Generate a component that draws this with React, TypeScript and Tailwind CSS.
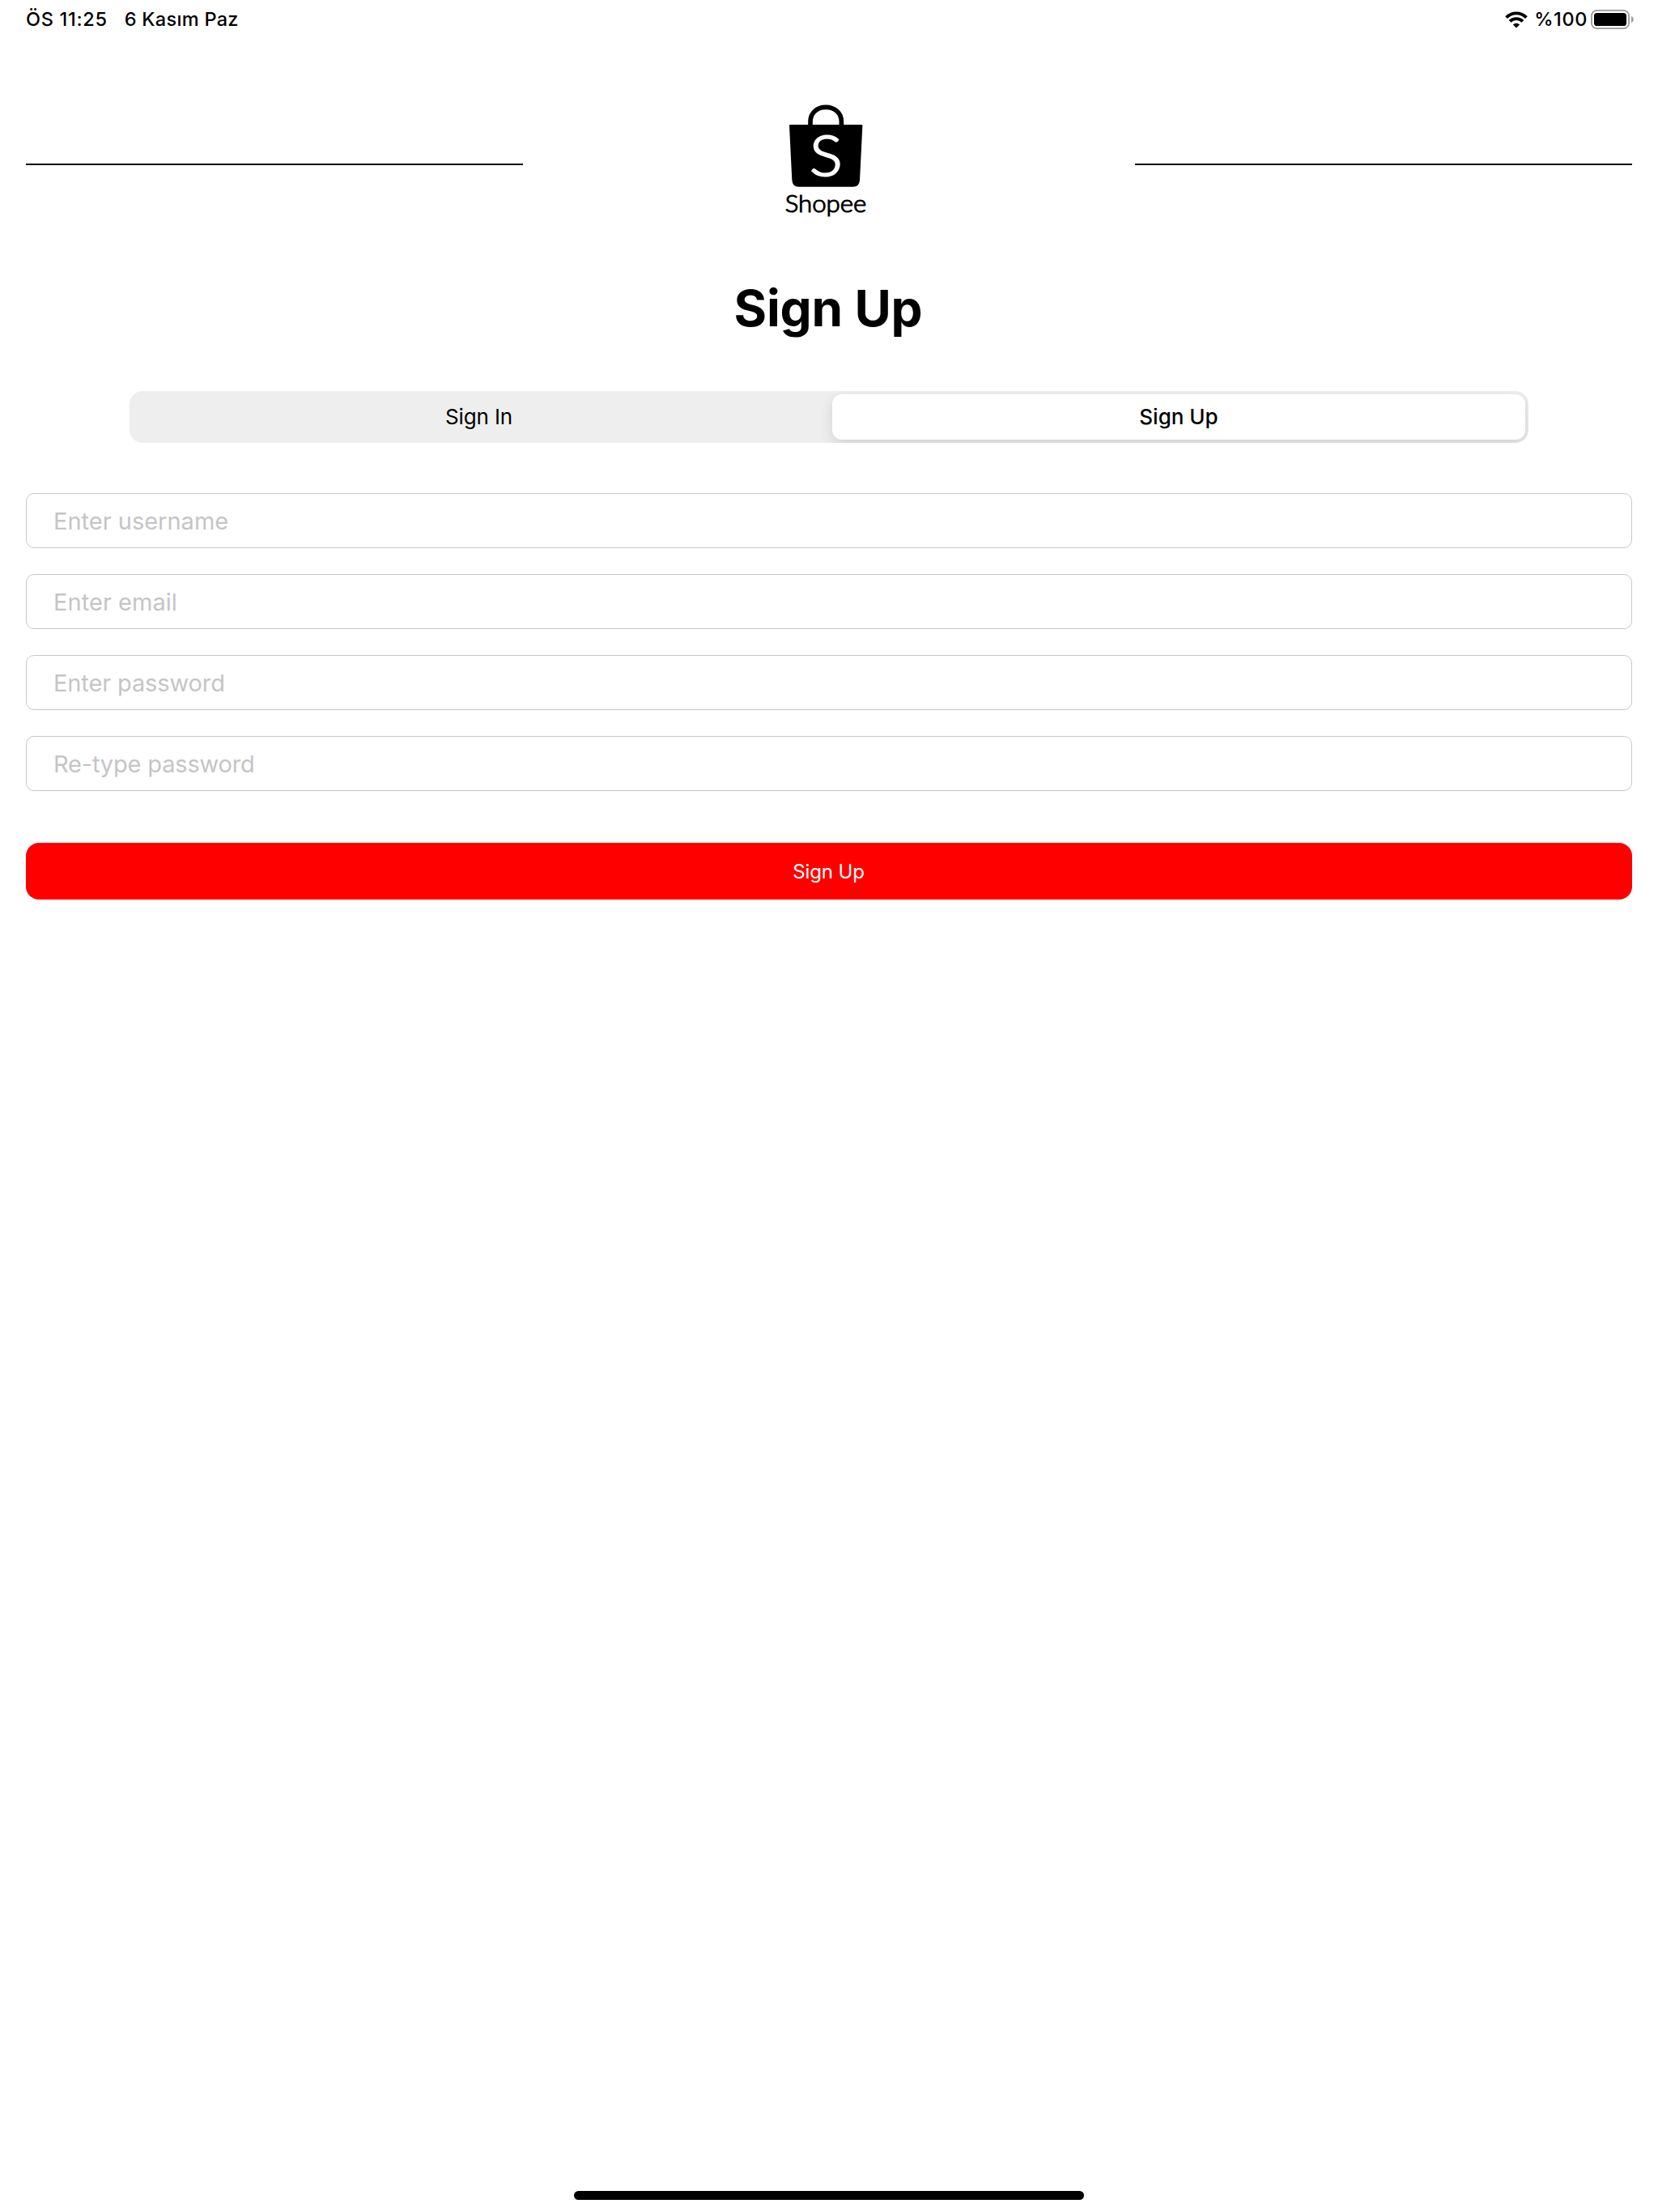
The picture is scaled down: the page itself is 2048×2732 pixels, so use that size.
const fields = [
  { label: "Enter username", type: "text", tracking: "tracking-normal" },
  { label: "Enter email", type: "email", tracking: "tracking-[0.05px]" },
  { label: "Enter password", type: "password", tracking: "tracking-[-0.12px]" },
  { label: "Re-type password", type: "password", tracking: "tracking-[-0.17px]" },
];

function WifiIcon() {
  return (
    <svg className="h-[21px] w-[28px]" viewBox="0 0 28 21" fill="none" stroke="#000">
      <path d="M1.6 7.6C8.5 0.6 19.5 0.6 26.4 7.6" strokeWidth="3.9" />
      <path d="M6.1 12.3C10.5 8 17.5 8 21.9 12.3" strokeWidth="3.9" />
      <path d="M14 20.6L9.9 16.5C12.2 14.2 15.8 14.2 18.1 16.5Z" fill="#000" stroke="none" />
    </svg>
  );
}

function BatteryIcon() {
  return (
    <svg className="h-[24px] w-[53px]" viewBox="0 0 53 24">
      <rect x="0.9" y="0.9" width="46.2" height="22.2" rx="6.6" fill="none" stroke="#9b9b9b" strokeWidth="1.8" />
      <rect x="4" y="4" width="40" height="16" rx="3.6" fill="#000" />
      <path d="M50 8C53.7 9.4 53.7 14.6 50 16Z" fill="#9b9b9b" />
    </svg>
  );
}

function StatusBar() {
  return (
    <header className="flex h-12 items-center justify-between pr-[30px] pl-8 text-[23.5px] font-medium">
      <div className="flex gap-[21px]">
        <span className="tracking-[0.7px]">ÖS 11:25</span>
        <span className="tracking-[0.3px]">6 Kasım Paz</span>
      </div>
      <div className="flex items-center">
        <WifiIcon />
        <span className="mr-1 ml-2 tracking-[0.6px]">%100</span>
        <BatteryIcon />
      </div>
    </header>
  );
}

function Logo() {
  return (
    <svg className="h-[170px] w-[160px]" viewBox="12 0 480 510">
      <path
        d="M183 136V121C183 88 209 67 240.500 67C272 67 298 88 298 121V136"
        fill="#fff"
        stroke="#000"
        strokeWidth="17"
      />
      <path d="M109 132H372Q376 132 376 136L366 338Q364 362 340 362H140Q117 362 115 338L105 136Q105 132 109 132Z" />
      <text
        x="241"
        y="322"
        textAnchor="middle"
        fill="#fff"
        stroke="#fff"
        strokeWidth="6"
        fontFamily="Lato, sans-serif"
        fontWeight="300"
        fontSize="207"
        textLength="122"
        lengthAdjust="spacingAndGlyphs"
      >
        S
      </text>
      <text
        x="240"
        y="455"
        textAnchor="middle"
        stroke="#000"
        strokeWidth="3.5"
        fontFamily="Lato, sans-serif"
        fontWeight="300"
        fontSize="91"
        textLength="302"
        lengthAdjust="spacingAndGlyphs"
      >
        Shopee
      </text>
    </svg>
  );
}

export default function App() {
  return (
    <div className="flex h-[2732px] w-[2048px] flex-col bg-white font-['Inter',sans-serif] text-black">
      <StatusBar />
      <main className="flex flex-col px-8 pt-[62px]">
        <div className="flex items-center justify-between">
          <div className="mt-4 h-0.5 w-[614px] bg-black" />
          <Logo />
          <div className="mt-4 h-0.5 w-[614px] bg-black" />
        </div>
        <h1 className="mt-[61px] h-20 pr-[2px] text-center text-[62px] leading-[80px] font-bold tracking-[-0.2px]">
          Sign Up
        </h1>
        <div className="mx-32 mt-[62px] flex h-16 overflow-hidden rounded-2xl bg-[#eeeeee] p-1 text-[26px]">
          <button className="flex-1 pr-[9px] pb-0.5 tracking-[-0.1px]">Sign In</button>
          <button className="w-[856px] rounded-xl bg-white pb-0.5 font-medium shadow-[0_6px_16px_rgba(0,0,0,0.12)]">
            Sign Up
          </button>
        </div>
        <form className="flex flex-col">
          <div className="mt-[62px] flex flex-col gap-8">
            {fields.map((f) => (
              <input
                key={f.label}
                type={f.type}
                placeholder={f.label}
                className={`h-[68px] rounded-[10px] border border-[#c8c8c8] px-[33px] text-[29px] placeholder:text-[#c5c5c6] ${f.tracking}`}
              />
            ))}
          </div>
          <button type="button" className="mt-16 h-[70px] rounded-2xl bg-[#ff0000] pt-0.5 pr-px text-2xl tracking-[-0.1px] text-white">
            Sign Up
          </button>
        </form>
      </main>
      <div className="mx-auto mt-auto mb-[15px] h-[11px] w-[630px] rounded-full bg-black" />
    </div>
  );
}
